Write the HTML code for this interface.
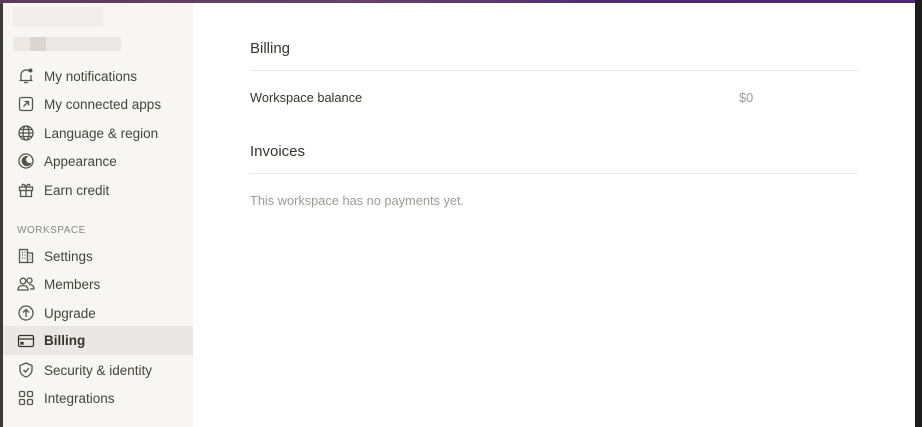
<!DOCTYPE html>
<html><head><style>
body{margin:0;width:922px;height:427px;overflow:hidden;background:#3a3a3a;font-family:"Liberation Sans",sans-serif;position:relative}
.top{position:absolute;left:0;top:0;width:922px;height:4px;background:linear-gradient(90deg,#5a3a5e,#6a3e6e 40%,#4b2b78 70%,#4a2a7a)}
.right{position:absolute;left:915px;top:0;width:7px;height:427px;background:#1c1c1c}
.panel{position:absolute;left:3px;top:3px;width:912px;height:424px;background:#fff}
.side{position:absolute;left:0;top:0;width:190px;height:424px;background:#f7f6f3}
.item{position:absolute;left:0;width:190px;height:28px;display:flex;align-items:center;font-size:13.5px;color:#45433e}
.item svg{position:absolute;left:14px;width:18px;height:18px}
.item span{position:absolute;left:41px}
.sel{background:#e9e8e5;font-weight:bold;color:#37352f}
.lbl{position:absolute;left:14px;top:222px;font-size:10px;letter-spacing:.5px;color:#8a8884}
.blur{position:absolute;background:#eae7e4}
h2{margin:0;font-weight:normal;font-size:15px;color:#37352f;position:absolute;left:247px}
.line{position:absolute;left:247px;width:608px;height:1px;background:#ebeae8}
.t{position:absolute;font-size:12.8px}
</style></head><body>
<div class="top"></div><div class="right"></div>
<div class="panel">
<div class="side">
<div class="blur" style="left:10px;top:4px;width:90px;height:20px;background:#f0eeec"></div>
<div class="blur" style="left:10px;top:34px;width:108px;height:14px;background:#ebe8e5"></div>
<div class="blur" style="left:27px;top:34px;width:16px;height:14px;background:#ddd5d0"></div>
<div class="item" style="top:59px"><svg viewBox="0 0 18 18" fill="none" stroke="#55534e" stroke-width="1.3"><path d="M4 13V8a5 5 0 0 1 8-4M14 8v5M2.5 13.5h13M7 15.5h4"/><circle cx="13.5" cy="3.5" r="2" fill="#55534e" stroke="none"/></svg><span>My notifications</span></div>
<div class="item" style="top:87px"><svg viewBox="0 0 18 18" fill="none" stroke="#55534e" stroke-width="1.3"><rect x="2.5" y="2.5" width="13" height="13" rx="2"/><path d="M6.5 11.5l5-5M7.5 6.5h4v4"/></svg><span>My connected apps</span></div>
<div class="item" style="top:116px"><svg viewBox="0 0 18 18" fill="none" stroke="#55534e" stroke-width="1.3"><circle cx="9" cy="9" r="7"/><ellipse cx="9" cy="9" rx="3" ry="7"/><path d="M2 9h14M3 5.5h12M3 12.5h12"/></svg><span>Language &amp; region</span></div>
<div class="item" style="top:144px"><svg viewBox="0 0 18 18" fill="none" stroke="#55534e" stroke-width="1.3"><circle cx="9" cy="9" r="7"/><path d="M10 4.5a4.5 4.5 0 1 0 3.5 7A4 4 0 0 1 10 4.5z" fill="#55534e"/></svg><span>Appearance</span></div>
<div class="item" style="top:173px"><svg viewBox="0 0 18 18" fill="none" stroke="#55534e" stroke-width="1.3"><rect x="2.5" y="6" width="13" height="3.5"/><path d="M3.5 9.5v6h11v-6M9 6v9.5M9 6C7 2 4.5 3 5.5 5M9 6c2-4 4.5-3 3.5-1"/></svg><span>Earn credit</span></div>
<div class="lbl">WORKSPACE</div>
<div class="item" style="top:239px"><svg viewBox="0 0 18 18" fill="none" stroke="#55534e" stroke-width="1.3"><rect x="2.5" y="2.5" width="8" height="13"/><path d="M10.5 6h5v9.5h-5M5 5h1M7.5 5h1M5 8h1M7.5 8h1M5 11h1M7.5 11h1M12.5 9h1M12.5 12h1"/></svg><span>Settings</span></div>
<div class="item" style="top:267px"><svg viewBox="0 0 18 18" fill="none" stroke="#55534e" stroke-width="1.3"><circle cx="6" cy="6" r="2.8"/><circle cx="12.5" cy="5.5" r="2.5"/><path d="M1 15c0-3 2-4.5 5-4.5s5 1.5 5 4.5zM12 9.5c3 0 5 1.5 5 4.5h-4"/></svg><span>Members</span></div>
<div class="item" style="top:296px"><svg viewBox="0 0 18 18" fill="none" stroke="#55534e" stroke-width="1.3"><circle cx="9" cy="9" r="7"/><path d="M9 13V5.5M6 8.5l3-3 3 3"/></svg><span>Upgrade</span></div>
<div class="item sel" style="top:323px;height:29px"><svg viewBox="0 0 18 18" fill="none" stroke="#37352f" stroke-width="1.3"><rect x="1.5" y="3.5" width="15" height="11" rx="1.5"/><path d="M1.5 7h15"/><rect x="4" y="10.5" width="2" height="1.5" fill="#37352f"/></svg><span>Billing</span></div>
<div class="item" style="top:353px"><svg viewBox="0 0 18 18" fill="none" stroke="#55534e" stroke-width="1.3"><path d="M9 2l6 2.5v4c0 4-3 6.5-6 7.5-3-1-6-3.5-6-7.5v-4z"/><path d="M6.5 9l2 2 3.5-4"/></svg><span>Security &amp; identity</span></div>
<div class="item" style="top:381px"><svg viewBox="0 0 18 18" fill="none" stroke="#55534e" stroke-width="1.3"><rect x="2.5" y="2.5" width="5" height="5" rx="1.2"/><rect x="10.5" y="2.5" width="5" height="5" rx="1.2"/><rect x="2.5" y="10.5" width="5" height="5" rx="1.2"/><rect x="10.5" y="10.5" width="5" height="5" rx="1.2"/></svg><span>Integrations</span></div>
</div>
<h2 style="top:37px">Billing</h2>
<div class="line" style="top:67px"></div>
<div class="t" style="left:247px;top:87px;color:#37352f">Workspace balance</div>
<div class="t" style="left:736px;top:87px;color:#9b9a97">$0</div>
<h2 style="top:140px">Invoices</h2>
<div class="line" style="top:170px"></div>
<div class="t" style="left:247px;top:190px;color:#9b9a97">This workspace has no payments yet.</div>
</div>
</body></html>
